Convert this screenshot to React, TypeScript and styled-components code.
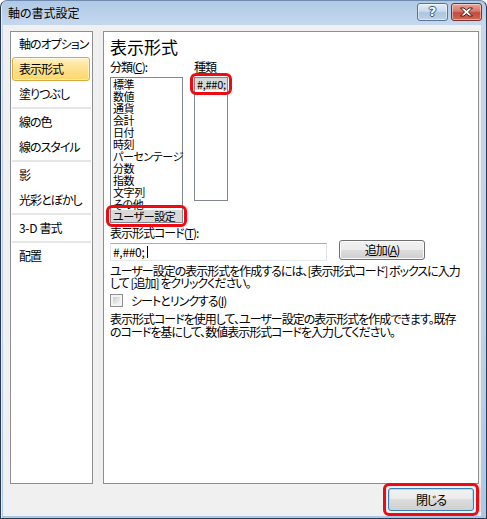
import React from "react";
import styled, { createGlobalStyle } from "styled-components";

const GlobalStyle = createGlobalStyle`
  html, body {
    margin: 0;
    padding: 0;
    background: #ffffff;
  }
  body {
    font-family: "Noto Sans CJK JP", "Noto Sans", sans-serif;
    font-feature-settings: "palt";
    font-size: 12px;
    letter-spacing: -1px;
    color: #000;
  }
`;

const Window = styled.div`
  width: 487px;
  height: 519px;
  box-sizing: border-box;
  display: flex;
  flex-direction: column;
  border: 1px solid #2b3a4c;
  border-top-color: #6f8cb0;
  border-radius: 7px 7px 0 0;
  padding: 0 5px 2px 2px;
  background: linear-gradient(180deg, #b0c9e5 0%, #c3d7ee 22px, #bcd3ec 60%, #a9c8e8 100%);
  box-shadow: inset 1px 0 0 #e4eef9;
`;

const TitleBar = styled.div`
  height: 24px;
  display: flex;
  align-items: center;
  padding-left: 5px;
`;

const Title = styled.div`
  flex: 1;
  font-size: 12px;
  line-height: 24px;
  letter-spacing: 0;
  color: #000;
`;

const CaptionButtons = styled.div`
  align-self: flex-start;
  margin-top: 2px;
  margin-right: -1px;
  display: flex;
  gap: 3px;
`;

const CaptionButton = styled.div<{ $close?: boolean }>`
  width: 29px;
  height: 16px;
  border: 1px solid ${(p) => (p.$close ? "#7b3129" : "#5a7495")};
  border-radius: 3px;
  display: flex;
  align-items: center;
  justify-content: center;
  background: ${(p) =>
    p.$close
      ? "linear-gradient(180deg, #e8a598 0%, #d6786b 45%, #c4493d 55%, #cf6a55 100%)"
      : "linear-gradient(180deg, #e4edf7 0%, #c9d9ec 45%, #aec5df 55%, #bcd2ea 100%)"};
  box-shadow: inset 0 0 0 1px rgba(255, 255, 255, 0.45);
`;

const HelpGlyph = styled.span`
  font-family: "DejaVu Sans", sans-serif;
  font-weight: bold;
  font-size: 13px;
  line-height: 16px;
  letter-spacing: 0;
  color: #ffffff;
  text-shadow: 1px 0 0 #3c4f68, -1px 0 0 #3c4f68, 0 1px 0 #3c4f68, 0 -1px 0 #3c4f68;
`;

const Latin = styled.span`
  letter-spacing: -0.3px;
`;

const Client = styled.div`
  flex: 1;
  background: #f0f0f0;
  display: flex;
  flex-direction: column;
  padding: 6px 2px 0 7px;
  min-height: 0;
`;

const Main = styled.div`
  height: 453px;
  display: flex;
  gap: 10px;
`;

const NavPanel = styled.div`
  width: 83px;
  box-sizing: border-box;
  background: #fff;
  border: 1px solid #8e8f8f;
`;

const NavItem = styled.div<{ $active?: boolean }>`
  height: 24px;
  box-sizing: border-box;
  margin: 0 2px 1px 1px;
  padding-left: 6px;
  line-height: 22px;
  font-size: 12px;
  white-space: nowrap;
  border: 1px solid ${(p) => (p.$active ? "#d9a93b" : "transparent")};
  border-radius: 3px;
  background: ${(p) =>
    p.$active
      ? "linear-gradient(180deg, #fff3c6 0%, #ffe49a 35%, #fdd66c 100%)"
      : "transparent"};
  box-shadow: ${(p) => (p.$active ? "inset 0 0 0 1px rgba(255,255,255,0.5)" : "none")};
`;

const NavSeparator = styled.div`
  height: 2px;
  margin: 0 1px 1px 1px;
  background: #e6e6e6;
`;

const ContentPanel = styled.div`
  flex: 1;
  box-sizing: border-box;
  background: #fff;
  border: 1px solid #8e8f8f;
  padding: 5px 6px;
  display: flex;
  flex-direction: column;
`;

const Heading = styled.h2`
  margin: 0;
  font-size: 17px;
  font-weight: normal;
  line-height: 20px;
  letter-spacing: 0;
`;

const Columns = styled.div`
  display: flex;
  gap: 11px;
  margin-top: 3px;
`;

const Column = styled.div<{ $width: number }>`
  width: ${(p) => p.$width}px;
  display: flex;
  flex-direction: column;
`;

const Label = styled.div`
  font-size: 12px;
  line-height: 14px;
  white-space: nowrap;
`;

const ListBox = styled.div<{ $height: number }>`
  margin-top: 3px;
  height: ${(p) => p.$height}px;
  box-sizing: border-box;
  border: 1px solid #828790;
  background: #fff;
`;

const ListItem = styled.div<{ $selected?: boolean }>`
  height: 12px;
  line-height: 12px;
  font-size: 11px;
  letter-spacing: -0.4px;
  padding-left: 2px;
  white-space: nowrap;
  background: ${(p) => (p.$selected ? "#d9d9d9" : "transparent")};
`;

const Callout = styled.div`
  outline: 3px solid #ee0a12;
  outline-offset: 2px;
  border-radius: 1px;
`;

const CodeLabel = styled(Label)`
  margin-top: 3px;
`;

const CodeRow = styled.div`
  display: flex;
  align-items: flex-start;
  gap: 12px;
`;

const TextBox = styled.div`
  margin-top: 3px;
  width: 217px;
  height: 18px;
  box-sizing: border-box;
  border: 1px solid #abadb3;
  border-left-color: #e2e3ea;
  border-right-color: #dbdfe6;
  border-bottom-color: #e3e9ef;
  padding-left: 2px;
  display: flex;
  align-items: center;
  font-size: 12px;
  line-height: 14px;
`;

const Caret = styled.span`
  display: inline-block;
  width: 1px;
  height: 12px;
  background: #000;
  margin-left: 2px;
`;

const Button = styled.div<{ $default?: boolean; $w: number; $h: number }>`
  width: ${(p) => p.$w}px;
  height: ${(p) => p.$h}px;
  box-sizing: border-box;
  border: 1px solid ${(p) => (p.$default ? "#3c7fb1" : "#707070")};
  border-radius: 3px;
  background: linear-gradient(180deg, #f2f2f2 0%, #ebebeb 50%, #dddddd 50%, #cfcfcf 100%);
  box-shadow: inset 0 0 0 1px ${(p) => (p.$default ? "#a8e0f7" : "#fbfbfb")};
  display: flex;
  align-items: center;
  justify-content: center;
  font-size: 12px;
  line-height: 14px;
`;

const Paragraph = styled.div<{ $top: number; $lh: number }>`
  margin-top: ${(p) => p.$top}px;
  line-height: ${(p) => p.$lh}px;
  font-size: 12px;
  white-space: nowrap;
`;

const CheckRow = styled.div`
  margin-top: 5px;
  display: flex;
  align-items: center;
  gap: 8px;
  height: 13px;
  line-height: 13px;
`;

const CheckBox = styled.div`
  width: 13px;
  height: 13px;
  box-sizing: border-box;
  border: 1px solid #8e8f8f;
  background: #f4f4f4;
  padding: 2px;
  &::after {
    content: "";
    display: block;
    width: 100%;
    height: 100%;
    background: linear-gradient(135deg, #cbcbcb 0%, #e6e6e6 60%, #f7f7f7 100%);
  }
`;

const Footer = styled.div`
  flex: 1;
  display: flex;
  justify-content: flex-end;
  align-items: flex-start;
  padding: 4px 5px 0 0;
`;

const navGroups: { label: React.ReactNode; key: string; active?: boolean }[][] = [
  [
    { key: "axis", label: "軸のオプション" },
    { key: "format", label: "表示形式", active: true },
    { key: "fill", label: "塗りつぶし" },
  ],
  [
    { key: "lineColor", label: "線の色" },
    { key: "lineStyle", label: "線のスタイル" },
  ],
  [
    { key: "shadow", label: "影" },
    { key: "glow", label: "光彩とぼかし" },
  ],
  [
    {
      key: "3d",
      label: (
        <>
          <Latin>3-D </Latin>書式
        </>
      ),
    },
  ],
  [{ key: "align", label: "配置" }],
];

const categories = [
  "標準",
  "数値",
  "通貨",
  "会計",
  "日付",
  "時刻",
  "パーセンテージ",
  "分数",
  "指数",
  "文字列",
  "その他",
];

const CloseIcon = () => (
  <svg width="15" height="10" viewBox="0 0 15 10">
    <path
      d="M1.5 1 L5 1 L7.5 3.2 L10 1 L13.5 1 L9.5 5 L13.5 9 L10 9 L7.5 6.8 L5 9 L1.5 9 L5.5 5 Z"
      fill="#ffffff"
      stroke="#4a1a16"
      strokeWidth="1"
      strokeLinejoin="round"
    />
  </svg>
);

export default function App() {
  return (
    <>
      <GlobalStyle />
      <Window>
        <TitleBar>
          <Title>軸の書式設定</Title>
          <CaptionButtons>
            <CaptionButton>
              <HelpGlyph>?</HelpGlyph>
            </CaptionButton>
            <CaptionButton $close>
              <CloseIcon />
            </CaptionButton>
          </CaptionButtons>
        </TitleBar>
        <Client>
          <Main>
            <NavPanel>
              {navGroups.map((group, gi) => (
                <React.Fragment key={gi}>
                  {group.map((item) => (
                    <NavItem key={item.key} $active={item.active}>
                      {item.label}
                    </NavItem>
                  ))}
                  {gi < navGroups.length - 1 && <NavSeparator />}
                </React.Fragment>
              ))}
            </NavPanel>
            <ContentPanel>
              <Heading>表示形式</Heading>
              <Columns>
                <Column $width={73}>
                  <Label>
                    分類(<u>C</u>):
                  </Label>
                  <ListBox $height={146}>
                    {categories.map((c) => (
                      <ListItem key={c}>{c}</ListItem>
                    ))}
                    <Callout>
                      <ListItem $selected>ユーザー設定</ListItem>
                    </Callout>
                  </ListBox>
                </Column>
                <Column $width={34}>
                  <Label>種類</Label>
                  <ListBox $height={124}>
                    <Callout>
                      <ListItem $selected>
                        <Latin>#,##0;</Latin>
                      </ListItem>
                    </Callout>
                  </ListBox>
                </Column>
              </Columns>
              <CodeLabel>
                表示形式コード(<u>T</u>):
              </CodeLabel>
              <CodeRow>
                <TextBox>
                  <Latin>#,##0;</Latin>
                  <Caret />
                </TextBox>
                <Button $w={86} $h={20}>
                  追加(<u>A</u>)
                </Button>
              </CodeRow>
              <Paragraph $top={4} $lh={12}>
                ユーザー設定の表示形式を作成するには、[表示形式コード] ボックスに入力
                <br />
                して [追加] をクリックください。
              </Paragraph>
              <CheckRow>
                <CheckBox />
                <span>
                  シートとリンクする(<u>I</u>)
                </span>
              </CheckRow>
              <Paragraph $top={5} $lh={13}>
                表示形式コードを使用して、ユーザー設定の表示形式を作成できます。既存
                <br />
                のコードを基にして、数値表示形式コードを入力してください。
              </Paragraph>
            </ContentPanel>
          </Main>
          <Footer>
            <Callout>
              <Button $default $w={86} $h={23}>
                閉じる
              </Button>
            </Callout>
          </Footer>
        </Client>
      </Window>
    </>
  );
}
